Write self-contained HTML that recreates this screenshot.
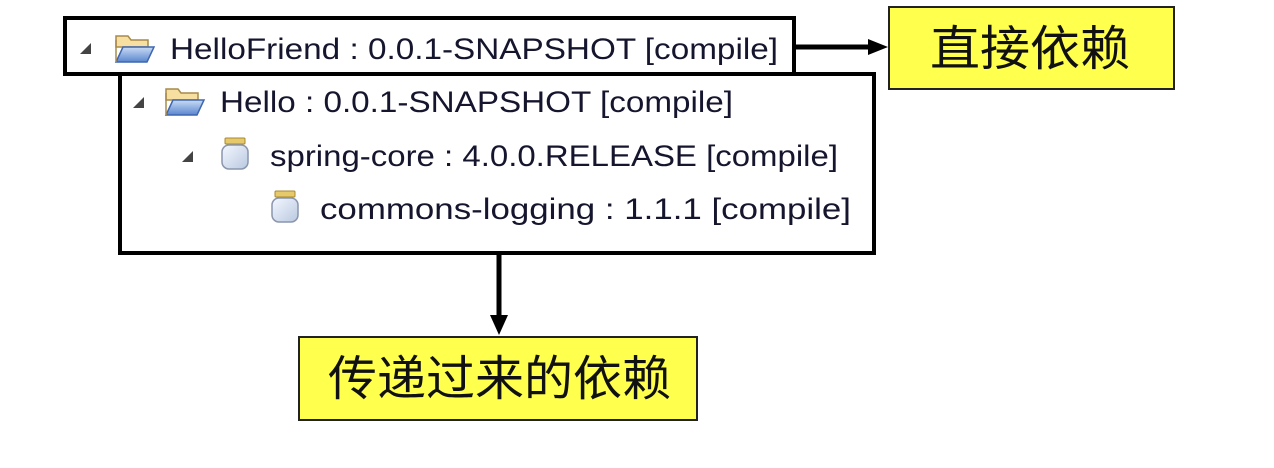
<!DOCTYPE html>
<html><head><meta charset="utf-8"><style>
html,body{margin:0;padding:0;background:#fff;width:1274px;height:468px;overflow:hidden}
svg{display:block}
</style></head><body>
<svg width="1274" height="468" viewBox="0 0 1274 468" xmlns="http://www.w3.org/2000/svg">
<defs>
<linearGradient id="fb" x1="0" y1="0" x2="0" y2="1"><stop offset="0" stop-color="#c9dcf5"/><stop offset="1" stop-color="#5a86cf"/></linearGradient>
<linearGradient id="jar" x1="0" y1="0" x2="1" y2="1"><stop offset="0" stop-color="#f4f8ff"/><stop offset="1" stop-color="#b9c8e0"/></linearGradient>
<g id="folder">
<path d="M2 3 h12 l3 4 h17 v7 H2z" fill="#f6dfa0" stroke="#a88a4a" stroke-width="1.5"/>
<path d="M2 29 L9 14 H40 L33 29z" fill="url(#fb)" stroke="#3f66b0" stroke-width="1.5"/>
<path d="M2 7 V29" stroke="#a88a4a" stroke-width="1.5"/>
</g>
<g id="jarI">
<rect x="4" y="0" width="20" height="6" rx="1" fill="#e6c96a" stroke="#a8882e" stroke-width="1"/>
<rect x="1" y="7" width="26" height="24" rx="7" fill="url(#jar)" stroke="#8a96ad" stroke-width="1.5"/>
</g>
<path id="tri" d="M0 11 L11 0 L11 11z" fill="#444"/>
</defs>

<rect x="65" y="18" width="729" height="56" fill="none" stroke="#000" stroke-width="4"/>
<path d="M120 74 V253 H874 V74 H794" fill="none" stroke="#000" stroke-width="4"/>

<line x1="796" y1="47" x2="872" y2="47" stroke="#000" stroke-width="5"/>
<path d="M868 39 L888 47 L868 55z" fill="#000"/>
<rect x="889" y="7" width="285" height="82" fill="#ffff4d" stroke="#222" stroke-width="2"/>
<text x="930" y="65" font-family="'Noto Sans CJK SC','WenQuanYi Zen Hei',sans-serif" font-size="48" fill="#111" textLength="200" lengthAdjust="spacingAndGlyphs">直接依赖</text>

<line x1="499" y1="255" x2="499" y2="320" stroke="#000" stroke-width="5"/>
<path d="M490 315 L499 335 L508 315z" fill="#000"/>
<rect x="299" y="337" width="398" height="83" fill="#ffff4d" stroke="#222" stroke-width="2"/>
<text x="328" y="395" font-family="'Noto Sans CJK SC','WenQuanYi Zen Hei',sans-serif" font-size="48" fill="#111" textLength="343" lengthAdjust="spacingAndGlyphs">传递过来的依赖</text>

<g font-family="'Liberation Sans',sans-serif" font-size="30" fill="#15152e">
<use href="#tri" x="80" y="43"/>
<use href="#folder" x="114" y="33"/>
<text x="170" y="59" textLength="608" lengthAdjust="spacingAndGlyphs">HelloFriend : 0.0.1-SNAPSHOT [compile]</text>

<use href="#tri" x="133" y="97"/>
<use href="#folder" x="164" y="86"/>
<text x="220" y="112" textLength="513" lengthAdjust="spacingAndGlyphs">Hello : 0.0.1-SNAPSHOT [compile]</text>

<use href="#tri" x="182" y="151"/>
<use href="#jarI" x="221" y="138"/>
<text x="270" y="166" textLength="568" lengthAdjust="spacingAndGlyphs">spring-core : 4.0.0.RELEASE [compile]</text>

<use href="#jarI" x="271" y="191"/>
<text x="320" y="219" textLength="531" lengthAdjust="spacingAndGlyphs">commons-logging : 1.1.1 [compile]</text>
</g>
</svg>
</body></html>
